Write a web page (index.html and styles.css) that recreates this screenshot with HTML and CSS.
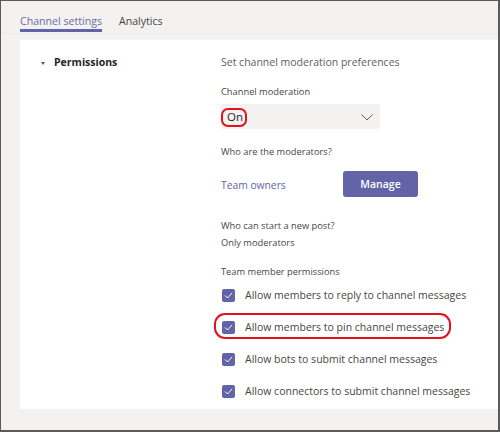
FILE: index.html
```html
<!DOCTYPE html>
<html>
<head>
<meta charset="utf-8">
<link rel="stylesheet" href="styles.css">
</head>
<body>
<div class="frame">
  <div class="tabs">
    <span class="tab active">Channel settings</span>
    <span class="tab">Analytics</span>
  </div>
  <div class="card">
    <div class="side">
      <span class="caret"></span>
      <span class="section-title">Permissions</span>
    </div>
    <div class="main">
      <div class="intro">Set channel moderation preferences</div>
      <div class="label lbl-mod">Channel moderation</div>
      <div class="select">
        <span class="select-value">On</span>
        <svg class="chev" width="12" height="7" viewBox="0 0 12 7"><path d="M0.5 0.5 L6 6 L11.5 0.5" fill="none" stroke="#605e5c" stroke-width="1"/></svg>
        <span class="ring ring-on"></span>
      </div>
      <div class="label lbl-who">Who are the moderators?</div>
      <div class="mods">
        <span class="link">Team owners</span>
        <span class="btn">Manage</span>
      </div>
      <div class="label lbl-post">Who can start a new post?</div>
      <div class="label lbl-only">Only moderators</div>
      <div class="label lbl-perm">Team member permissions</div>
      <div class="checks">
        <div class="check-row"><span class="box"><svg width="9" height="7" viewBox="0 0 9 7"><path d="M1 3.5 L3.5 6 L8 1" fill="none" stroke="#fff" stroke-width="1"/></svg></span><span>Allow members to reply to channel messages</span></div>
        <div class="check-row"><span class="box"><svg width="9" height="7" viewBox="0 0 9 7"><path d="M1 3.5 L3.5 6 L8 1" fill="none" stroke="#fff" stroke-width="1"/></svg></span><span>Allow members to pin channel messages</span><span class="ring ring-pin"></span></div>
        <div class="check-row"><span class="box"><svg width="9" height="7" viewBox="0 0 9 7"><path d="M1 3.5 L3.5 6 L8 1" fill="none" stroke="#fff" stroke-width="1"/></svg></span><span>Allow bots to submit channel messages</span></div>
        <div class="check-row"><span class="box"><svg width="9" height="7" viewBox="0 0 9 7"><path d="M1 3.5 L3.5 6 L8 1" fill="none" stroke="#fff" stroke-width="1"/></svg></span><span>Allow connectors to submit channel messages</span></div>
      </div>
    </div>
  </div>
</div>
</body>
</html>
```

FILE: styles.css
```css
* { box-sizing: border-box; }
html, body { margin: 0; padding: 0; }
body { font-family: "Open Sans", "Noto Sans", sans-serif; color: #484644; }

.frame {
  width: 500px;
  height: 432px;
  background: #f3f2f1;
  border-style: solid;
  border-color: #5a5a5a;
  border-width: 1px 2px 2px 1px;
  display: flex;
  flex-direction: column;
}

.tabs {
  height: 33px;
  padding-left: 19px;
  display: flex;
  gap: 17px;
  border-bottom: 1px solid #ebeae9;
}
.tab {
  font-size: 10.6px;
  line-height: 15px;
  padding-top: 13px;
  color: #484644;
}
.tab.active {
  color: #6b6da6;
  border-bottom: 3px solid #6264a7;
  height: 31px;
}

.card {
  margin-top: 6px;
  margin-left: 19px;
  height: 369px;
  background: #fff;
  display: grid;
  grid-template-columns: 201px 1fr;
}

.side {
  padding-top: 14px;
  padding-left: 20px;
  display: flex;
  align-items: center;
  align-self: start;
  height: 30px;
  gap: 9px;
}
.caret {
  width: 0; height: 0;
  border-left: 2.5px solid transparent;
  border-right: 2.5px solid transparent;
  border-top: 3.5px solid #605e5c;
  margin-top: 2px;
  margin-left: 1px;
}
.section-title {
  font-weight: 700;
  font-size: 10.5px;
  color: #252423;
  line-height: 16px;
}

.main {
  padding-top: 14px;
  display: flex;
  flex-direction: column;
  align-items: flex-start;
}
.intro {
  font-size: 10.5px;
  line-height: 16px;
  color: #605e5c;
}
.label {
  font-size: 9.3px;
  line-height: 14px;
  color: #484644;
}
.lbl-mod { margin-top: 15px; }
.select {
  position: relative;
  margin-top: 5px;
  width: 159px;
  height: 25px;
  background: #f3f2f1;
  border-radius: 2px;
  display: flex;
  align-items: center;
  justify-content: space-between;
  padding: 0 7px 0 6px;
}
.select-value { font-size: 11.5px; color: #252423; line-height: 16px; }
.chev { margin-top: 1px; }
.ring {
  position: absolute;
  border: 2px solid #e4121c;
  pointer-events: none;
}
.ring-on {
  left: 0; top: 4px;
  width: 26px; height: 19px;
  border-radius: 7px;
}
.lbl-who { margin-top: 16px; }
.mods {
  margin-top: 12px;
  display: flex;
  align-items: center;
}
.link {
  width: 122px;
  font-size: 10.3px;
  color: #6264a7;
  line-height: 16px;
  padding-top: 2px;
}
.btn {
  width: 75px;
  height: 26px;
  border-radius: 3px;
  background: #6264a7;
  color: #fff;
  font-size: 10.5px;
  font-weight: 600;
  display: flex;
  align-items: center;
  justify-content: center;
}
.lbl-post { margin-top: 22px; }
.lbl-only { margin-top: 3px; }
.lbl-perm { margin-top: 15px; }

.checks { display: flex; flex-direction: column; }
.check-row {
  position: relative;
  height: 32px;
  display: flex;
  align-items: center;
  gap: 10px;
  font-size: 10.5px;
  color: #484644;
}
.box {
  width: 13px; height: 13px;
  margin-left: 1px;
  border-radius: 2px;
  background: #6264a7;
  display: flex;
  align-items: center;
  justify-content: center;
}
.ring-pin {
  left: -7px; top: 2px;
  width: 237px; height: 26px;
  border-radius: 11px;
}
```
